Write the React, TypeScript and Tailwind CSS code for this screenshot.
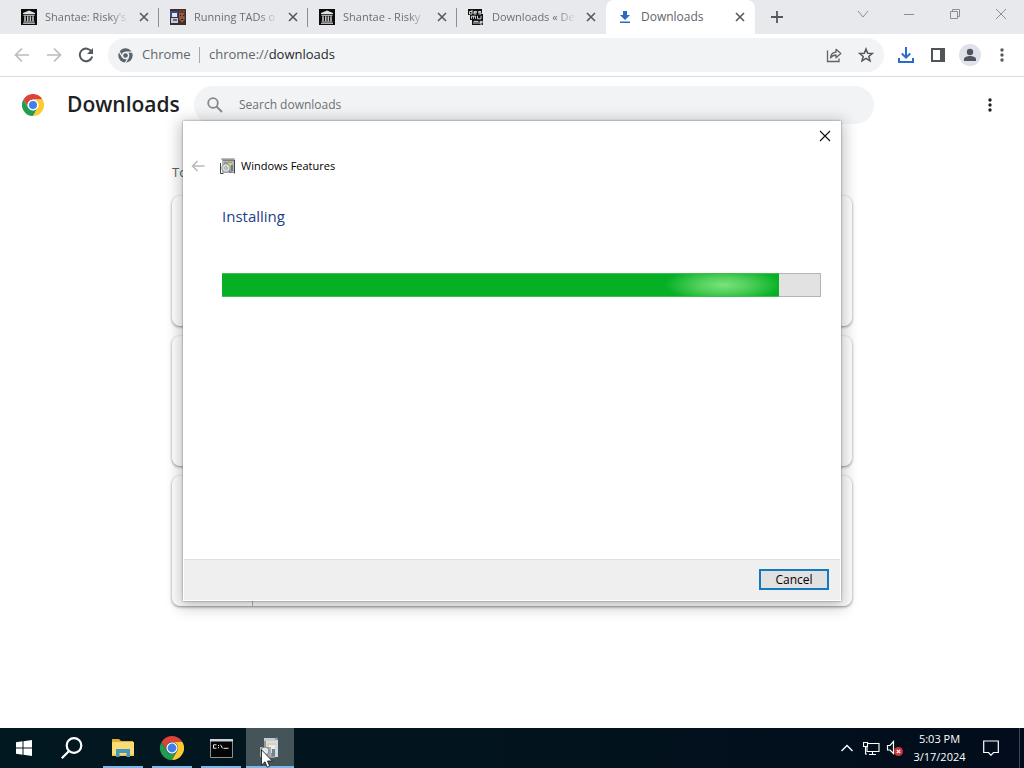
import type { ReactNode } from "react";

function ChromeLogo({ className }: { className: string }) {
  return (
    <svg viewBox="0 0 48 48" className={className} aria-hidden="true">
      <path d="M24 12h20.8A24 24 0 0 0 3.2 12l10.4 18A12 12 0 0 1 24 12z" fill="#db4437" />
      <path d="M34.4 30 24 48A24 24 0 0 1 3.2 12l10.4 18a12 12 0 0 0 20.8 0z" fill="#229c50" />
      <path d="M24 12h20.8A24 24 0 0 1 24 48l10.4-18A12 12 0 0 0 24 12z" fill="#fccb2e" />
      <circle cx="24" cy="24" r="11.5" fill="#fff" />
      <circle cx="24" cy="24" r="8.8" fill="#3f80ec" />
    </svg>
  );
}

function ChromeMono({ className }: { className: string }) {
  return (
    <svg viewBox="0 0 48 48" className={className} aria-hidden="true">
      <circle cx="24" cy="24" r="23" fill="#5a646c" />
      <path d="M24 13h22M14.5 29.5 3.5 11M33.5 29.5 23 48" stroke="#f1f3f4" strokeWidth="4" fill="none" />
      <circle cx="24" cy="24" r="12" fill="#f1f3f4" />
      <circle cx="24" cy="24" r="7.5" fill="#5a646c" />
    </svg>
  );
}

function ArchiveIcon() {
  return (
    <svg viewBox="0 0 16 16" className="size-4 shrink-0" aria-hidden="true">
      <path d="M0 0h16v16H0z" fill="#0c0c0c" />
      <path d="M8 1.4 14 4v1H2V4zM2.5 5.8h11v.9h-11zM2.5 12.6h11v.9h-11zM2 14.2h12v.9H2z" fill="#e2e2e2" />
      <path d="M3.2 7.2h1.6v5H3.2zM6 7.2h1.5v5H6zM8.6 7.2h1.5v5H8.6zM11.2 7.2h1.6v5h-1.6z" fill="#c4c4c4" />
    </svg>
  );
}

function TadsIcon() {
  return (
    <svg viewBox="0 0 16 16" className="size-4 shrink-0" aria-hidden="true">
      <path d="M0 0h16v16H0z" fill="#3d2d2c" />
      <path d="M0 2h8v6H0z" fill="#3b4a86" />
      <path d="M2 4h5v4H2z" fill="#dfe6f3" />
      <path d="M1 9h7v5H1z" fill="#c9cbd6" />
      <path d="M3 10h4v2H3z" fill="#5c6d9f" />
      <path d="M9 4h5l1 6-3 4-3-4z" fill="#8d5a48" />
      <path d="M10 6h1v1h-1zM13 6h1v1h-1zM11 10h2v1h-2z" fill="#2b1715" />
      <path d="M9 1h6v3H9z" fill="#6b3e2c" />
    </svg>
  );
}

function DesmumeIcon() {
  return (
    <svg viewBox="0 0 16 16" className="size-4 shrink-0" aria-hidden="true">
      <path d="M0 0h14v6H0zM2 5h13v6H2zM4 10h11v6H4z" fill="#111" />
      <path
        d="M4 1v4M4 2.500H1.500V5H4M8.500 5H6V2.500h2.500v1.200H6M13 2.500h-2.500v1.200H13V5h-2.500M3.500 9.800V7.200h4v2.600M5.500 7.200v2.600M9.500 6.800v3H13v-3M6 15v-2.600h4V15M8 12.400V15M14.300 15H12v-2.600h2.300v1.200H12"
        fill="none"
        stroke="#e6e6e6"
        strokeWidth=".9"
      />
    </svg>
  );
}

function DownloadTabIcon() {
  return (
    <svg viewBox="0 0 16 16" className="size-4 shrink-0" aria-hidden="true">
      <path d="M6 2h4v4h3L8 11 3 6h3zM3 12.500h10V14H3z" fill="#2a6bc8" />
    </svg>
  );
}

function CrossIcon() {
  return (
    <svg viewBox="0 0 10 10" className="size-[10px]" aria-hidden="true">
      <path d="m1 1 8 8M9 1 1 9" stroke="#55585c" strokeWidth="1.6" />
    </svg>
  );
}

function Tab({ icon, title, active }: { icon: ReactNode; title: string; active?: boolean }) {
  return (
    <div
      role="tab"
      aria-selected={!!active}
      className={
        active
          ? "flex h-[34px] w-[149px] shrink-0 items-center rounded-t-lg bg-white pl-[11px]"
          : "flex h-[34px] w-[149px] shrink-0 items-center pl-[11px]"
      }
    >
      {icon}
      <span
        className={
          active
            ? "ml-2 w-[84px] overflow-hidden text-[12px] whitespace-nowrap text-[#616469]"
            : "ml-2 w-[84px] overflow-hidden text-[11px] whitespace-nowrap text-[#6c6e72] [mask-image:linear-gradient(to_right,#000_78%,transparent)]"
        }
      >
        {title}
      </span>
      <button type="button" aria-label={`Close ${title}`} className="flex h-5 w-[30px] items-center justify-center">
        <CrossIcon />
      </button>
    </div>
  );
}

function Separator() {
  return <div className="-ml-px h-[19px] w-px shrink-0 bg-[#8b8e93]" />;
}

function TabStrip() {
  return (
    <div className="flex h-[34px] items-center bg-[#e8e9ec]">
      <div role="tablist" className="flex items-center pl-[10px]">
        <Tab icon={<ArchiveIcon />} title="Shantae: Risky's" />
        <Separator />
        <Tab icon={<TadsIcon />} title="Running TADs o" />
        <Separator />
        <Tab icon={<ArchiveIcon />} title="Shantae - Risky" />
        <Separator />
        <Tab icon={<DesmumeIcon />} title="Downloads « De" />
        <Tab icon={<DownloadTabIcon />} title="Downloads" active />
      </div>
      <button type="button" aria-label="New tab" className="ml-3 flex size-5 items-center justify-center">
        <svg viewBox="0 0 12 12" className="size-3" aria-hidden="true">
          <path d="M6 0v12M0 6h12" stroke="#55585c" strokeWidth="1.800" />
        </svg>
      </button>
      <div className="ml-auto flex h-7 self-start text-[#8b8e92]">
        <button type="button" aria-label="Search tabs" className="flex w-[46px] items-center justify-center">
          <svg viewBox="0 0 12 12" className="size-3" fill="none" stroke="currentColor">
            <path d="m1 3 5 6 5-6" />
          </svg>
        </button>
        <button type="button" aria-label="Minimize" className="flex w-[46px] items-center justify-center">
          <svg viewBox="0 0 12 12" className="size-3" fill="none" stroke="currentColor">
            <path d="M1 6.500h10" />
          </svg>
        </button>
        <button type="button" aria-label="Restore" className="flex w-[46px] items-center justify-center">
          <svg viewBox="0 0 12 12" className="size-3" fill="none" stroke="currentColor">
            <path d="M1.500 3.500h7v7h-7zM3.500 3.500v-2h7v7h-2" />
          </svg>
        </button>
        <button type="button" aria-label="Close window" className="flex w-[46px] items-center justify-center">
          <svg viewBox="0 0 12 12" className="size-3" fill="none" stroke="currentColor">
            <path d="m1 1 10 10M11 1 1 11" />
          </svg>
        </button>
      </div>
    </div>
  );
}

function Dots({ className }: { className: string }) {
  return (
    <svg viewBox="0 0 4 16" className={className} fill="currentColor" aria-hidden="true">
      <circle cx="2" cy="3" r="1.700" />
      <circle cx="2" cy="8" r="1.700" />
      <circle cx="2" cy="13" r="1.700" />
    </svg>
  );
}

function Toolbar() {
  return (
    <div className="flex h-[43px] items-center border-b border-[#d9dce0] bg-white pr-[6px] pl-[6px]">
      <button type="button" aria-label="Back" className="flex size-8 items-center justify-center text-[#babcbe]">
        <svg viewBox="0 0 16 16" className="size-4" fill="none" stroke="currentColor" strokeWidth="1.700">
          <path d="M15 8H2M8 1.500 1.500 8 8 14.500" />
        </svg>
      </button>
      <button type="button" aria-label="Forward" className="flex size-8 items-center justify-center text-[#babcbe]">
        <svg viewBox="0 0 16 16" className="size-4" fill="none" stroke="currentColor" strokeWidth="1.700">
          <path d="M1 8h13M8 1.500 14.500 8 8 14.500" />
        </svg>
      </button>
      <button type="button" aria-label="Reload" className="flex size-8 items-center justify-center text-[#55585c]">
        <svg viewBox="0 0 16 16" className="size-4" fill="none" stroke="currentColor" strokeWidth="2">
          <path d="M13.600 4.800A6.300 6.300 0 1 0 14.200 9.500" />
          <path d="M15 1v6H9z" fill="currentColor" stroke="none" />
        </svg>
      </button>
      <div className="ml-[6px] flex h-[34px] flex-1 items-center rounded-full bg-[#f1f3f4] pr-[2px] pl-[10px] text-[13px] text-[#63666b]">
        <ChromeMono className="size-[15px] shrink-0" />
        <span className="ml-[9px] w-[57px] whitespace-nowrap">Chrome</span>
        <span className="h-4 w-px bg-[#a5a8ac]" />
        <span className="ml-[9px] flex-1 whitespace-nowrap">
          chrome://<span className="text-[#26282b]">downloads</span>
        </span>
        <button type="button" aria-label="Share" className="flex w-8 justify-center text-[#606368]">
          <svg viewBox="0 0 16 16" className="size-4" fill="none" stroke="currentColor" strokeWidth="1.300">
            <path d="M1.500 3.500v11h11.500v-3" />
            <path d="M4.500 11c.3-3.800 2.200-5.600 5.500-5.800V2.300l4.800 4.300-4.800 4.200V8C7.500 8 6 8.800 4.500 11z" strokeLinejoin="round" />
          </svg>
        </button>
        <button type="button" aria-label="Bookmark" className="flex w-8 justify-center text-[#55585c]">
          <svg viewBox="0 0 16 16" className="size-4" fill="none" stroke="currentColor" strokeWidth="1.500">
            <path d="m8 2 1.700 4.200 4.600.3-3.500 2.900 1.200 4.500L8 11.400l-4 2.500 1.200-4.500-3.500-2.900 4.600-.3z" />
          </svg>
        </button>
      </div>
      <button type="button" aria-label="Downloads" className="ml-[6px] flex w-8 justify-center text-[#2a6bd2]">
        <svg viewBox="0 0 16 16" className="size-4" fill="none" stroke="currentColor" strokeWidth="2">
          <path d="M8 0v10.500M3.800 6.500 8 10.700l4.200-4.200M1 11v4h14v-4" />
        </svg>
      </button>
      <button type="button" aria-label="Side panel" className="flex w-8 justify-center">
        <svg viewBox="0 0 14 14" className="size-[14px]" aria-hidden="true">
          <path d="M0 0h14v14H0z" fill="#515459" />
          <path d="M2 2h7v10H2z" fill="#fff" />
        </svg>
      </button>
      <button type="button" aria-label="Profile" className="flex w-8 justify-center">
        <svg viewBox="0 0 22 22" className="size-[22px]" aria-hidden="true">
          <circle cx="11" cy="11" r="11" fill="#dfe2e8" />
          <circle cx="11" cy="8" r="3.200" fill="#4f5560" />
          <path d="M5 17v-2c0-2 3.500-3 6-3s6 1 6 3v2z" fill="#4f5560" />
        </svg>
      </button>
      <button type="button" aria-label="Chrome menu" className="flex w-8 justify-center text-[#55585c]">
        <Dots className="h-4 w-1" />
      </button>
    </div>
  );
}

function DownloadsPage() {
  return (
    <main className="flex flex-1 flex-col bg-white">
      <header className="flex h-14 items-center pr-8 pl-[22px]">
        <ChromeLogo className="size-[22px] shrink-0" />
        <h1 className="ml-[23px] w-[127px] text-[21px] font-semibold text-[#202124]">Downloads</h1>
        <div className="flex h-[38px] w-[680px] items-center rounded-full bg-[#f1f3f4] pl-[13px]">
          <svg viewBox="0 0 16 16" className="size-4 shrink-0" fill="none" stroke="#85888c" strokeWidth="1.800">
            <circle cx="6" cy="6" r="4.800" />
            <path d="m9.500 9.500 5.500 5.500" />
          </svg>
          <input
            type="text"
            aria-label="Search downloads"
            placeholder="Search downloads"
            className="ml-4 flex-1 bg-transparent text-[12px] outline-none placeholder:text-[#6d7074]"
          />
        </div>
        <button type="button" aria-label="More actions" className="ml-auto text-[#202124]">
          <Dots className="h-4 w-1" />
        </button>
      </header>
      <section className="mx-auto w-full max-w-[680px] pt-[29px]">
        <h2 className="h-[34px] text-[13px] leading-5 text-[#5c5f63]">Today</h2>
        <div className="flex flex-col gap-[10px]">
          <div className="h-[130px] rounded-lg bg-white shadow-[0_1px_3px_rgba(0,0,0,0.45)]" />
          <div className="h-[130px] rounded-lg bg-white shadow-[0_1px_3px_rgba(0,0,0,0.45)]" />
          <div className="flex h-[130px] rounded-lg bg-white shadow-[0_1px_3px_rgba(0,0,0,0.45)]">
            <div className="w-[81px] border-r border-[#b5b5b5]" />
          </div>
        </div>
      </section>
    </main>
  );
}

function FeaturesIcon({ className }: { className: string }) {
  return (
    <svg viewBox="0 0 16 16" className={className} aria-hidden="true">
      <path d="M2 1h12v14H2z" fill="#b3b8b6" />
      <path d="M1 1h14M3 2.500h11" stroke="#7b807e" fill="none" />
      <path d="M.5 5v10.500h3M14.500 2v13.500" stroke="#3d4446" fill="none" />
      <path d="M4 4h8v2H4z" fill="#8d9a9b" />
      <path d="M8 5h4v3H8z" fill="#dfd04c" />
      <path d="M11 7h2v6h-2z" fill="#658183" />
      <circle cx="6" cy="10" r="4.200" fill="#dadddd" stroke="#8b9092" />
      <circle cx="6" cy="10" r="1.300" fill="#fff" stroke="#6d7375" strokeWidth=".7" />
      <path d="m9 12 5 3H9z" fill="#7c8c92" />
    </svg>
  );
}

function InstallDialog() {
  return (
    <div
      role="dialog"
      aria-label="Windows Features"
      className="absolute top-[121px] left-1/2 flex h-[480px] w-[658px] -translate-x-1/2 flex-col border border-white bg-white text-black shadow-[0_0_2px_rgba(0,0,0,0.45),0_3px_14px_3px_rgba(0,0,0,0.24)]"
    >
      <div className="flex h-[28px] justify-end">
        <button type="button" aria-label="Close" className="flex w-[30px] items-center justify-center">
          <svg viewBox="0 0 12 12" className="size-3" fill="none" stroke="#111" strokeWidth="1.100">
            <path d="m1 1 10 10M11 1 1 11" />
          </svg>
        </button>
      </div>
      <div className="flex h-8 items-center pl-[7px]">
        <button type="button" aria-label="Previous" disabled>
          <svg viewBox="0 0 14 14" className="size-[14px]" fill="none" stroke="#bbb" strokeWidth="1.600">
            <path d="M13.500 7H2M6.500 2l-5 5 5 5" />
          </svg>
        </button>
        <FeaturesIcon className="ml-[15px] size-4" />
        <span className="ml-[5px] text-[11px]">Windows Features</span>
      </div>
      <div className="flex flex-1 flex-col pr-[19px] pl-[38px]">
        <h2 className="mt-[22px] text-[15px] leading-6 text-[#1c3f87]">Installing</h2>
        <div role="progressbar" aria-label="Installing" aria-valuenow={93} className="mt-[45px] flex h-6">
          <div className="w-[93%] border-y border-[#45b955] bg-[#06b025] bg-[radial-gradient(ellipse_58px_18px_at_90%_50%,#7ae37c,#4fcf5a_45%,transparent)]" />
          <div className="flex-1 border border-l-0 border-[#b4b4b4] bg-[#e2e2e2]" />
        </div>
      </div>
      <footer className="flex h-[41px] items-start justify-end border-t border-[#dfdfdf] bg-[#efefef] pt-[9px] pr-[11px]">
        <button type="button" className="h-[21px] w-[70px] border-2 border-[#1379bd] bg-[#e1e1e1] text-[12px] leading-4">
          Cancel
        </button>
      </footer>
    </div>
  );
}

function TaskButton({ label, active, children }: { label: string; active?: boolean; children: ReactNode }) {
  return (
    <button
      type="button"
      aria-label={label}
      className={
        active
          ? "relative flex h-10 w-12 flex-col items-center bg-[#445459]"
          : "flex h-10 w-12 flex-col items-center"
      }
    >
      <span className="flex h-[38px] items-center pt-[2px]">{children}</span>
      <span className={active ? "h-[2px] w-12 bg-[#76b9ed]" : "h-[2px] w-10 bg-[#76b9ed]"} />
    </button>
  );
}

function Taskbar() {
  return (
    <footer className="flex h-10 items-center bg-[linear-gradient(90deg,#021820,#02131d_55%,#020c1c)] text-white">
      <button type="button" aria-label="Start" className="flex h-10 w-12 items-center justify-center">
        <svg viewBox="0 0 16 16" className="size-4" fill="#fff">
          <path d="M0 2.200 6.500 1.300v6.200H0zM7.500 1.200 16 0v7.500H7.500zM0 8.500h6.500v6.200L0 13.800zM7.500 8.500H16V16l-8.500-1.200z" />
        </svg>
      </button>
      <button type="button" aria-label="Search" className="flex h-10 w-12 items-center justify-center">
        <svg viewBox="0 0 22 22" className="size-[22px]" fill="none" stroke="#fff" strokeWidth="2.200">
          <circle cx="13" cy="8.500" r="7.300" />
          <path d="M8 14 .8 21.200" />
        </svg>
      </button>
      <div className="ml-[3px] flex gap-px">
        <TaskButton label="File Explorer">
          <svg viewBox="0 0 22 20" className="h-5 w-[22px]" aria-hidden="true">
            <path d="M0 1h7l2 2h12v3H0z" fill="#e3ad33" />
            <path d="M0 4h22v14H0z" fill="#fbdb76" />
            <path d="M0 16.500h22V18H0z" fill="#edc352" />
            <path d="M4 11h14v8h-3.500v-4h-7v4H4z" fill="#4598bd" />
          </svg>
        </TaskButton>
        <TaskButton label="Google Chrome">
          <ChromeLogo className="size-6" />
        </TaskButton>
        <TaskButton label="Command Prompt">
          <svg viewBox="0 0 23 19" className="h-[19px] w-[23px]" aria-hidden="true">
            <path d="M.5.500h22v18H.5z" fill="#050505" stroke="#8b9194" />
            <path d="M0 0h23v2.500H0z" fill="#cdd3d8" />
            <path d="M6.500 5.800h-3v3.400h3M8.500 6v1M8.500 8v1.200M10.500 5.800l2 3.500M13.500 9.300h5" fill="none" stroke="#e8e8e8" />
          </svg>
        </TaskButton>
        <TaskButton label="Windows Features" active>
          <svg viewBox="0 0 22 24" className="h-6 w-[22px]" aria-hidden="true">
            <path d="M5 2h12l1-1 1 3v16l-4 2H5z" fill="#929ba2" />
            <path d="M5 2h11v3H5z" fill="#c3cbd2" />
            <path d="M7 5h9v12H7z" fill="#d9dce0" />
            <path d="M8 7h8v3H8z" fill="#dfd28e" />
            <path d="M10 9h7v4h-7z" fill="#e9ecf0" />
            <path d="M16 4h3v17h-3z" fill="#d4d9df" />
            <path d="M13 13h3v7h-3z" fill="#6e8292" />
            <path d="M1 11h11v10H1z" fill="#a8acb0" />
            <circle cx="6" cy="15" r="4" fill="#e5e5e5" stroke="#7d8487" />
          </svg>
          <svg viewBox="0 0 12 19" className="absolute top-[21px] left-[15px] h-[19px] w-3" aria-hidden="true">
            <path d="M.5.800v15.400l3.500-3.400 2.200 5.400 2.500-1-2.200-5.200h4.800z" fill="#fff" stroke="#222" strokeWidth=".9" />
          </svg>
        </TaskButton>
      </div>
      <div className="ml-auto flex h-10 items-center">
        <button type="button" aria-label="Show hidden icons" className="flex w-6 justify-center">
          <svg viewBox="0 0 12 12" className="size-3" fill="none" stroke="#fff" strokeWidth="1.400">
            <path d="m.5 9 5.500-5.500L11.500 9" />
          </svg>
        </button>
        <button type="button" aria-label="Network" className="flex w-6 justify-center">
          <svg viewBox="0 0 17 15" className="h-[15px] w-[17px]" fill="none" stroke="#fff" strokeWidth="1.100">
            <path d="M5 2.500h11v8H4V6M9.500 10.500v3M6 13.500h7M.5 1.500h4v4h-4zM2.500 5.500V13h1.500" />
          </svg>
        </button>
        <button type="button" aria-label="Volume muted" className="flex w-6 justify-center">
          <svg viewBox="0 0 18 16" className="h-4 w-[18px]" aria-hidden="true">
            <path d="M1.500 5.500H4l3.500-4v12L4 10H1.500z" fill="none" stroke="#fff" strokeWidth="1.200" />
            <circle cx="12.500" cy="11.500" r="4.500" fill="#cf3339" />
            <path d="m10.800 9.800 3.400 3.400M14.200 9.800l-3.400 3.400" stroke="#fff" strokeWidth="1.200" />
          </svg>
        </button>
        <div className="w-[65px] text-center text-[11px] leading-[18px] whitespace-nowrap">
          <div>5:03 PM</div>
          <div>3/17/2024</div>
        </div>
        <button type="button" aria-label="Notifications" className="flex w-[38px] justify-center">
          <svg viewBox="0 0 16 16" className="size-4" fill="none" stroke="#fff" strokeWidth="1.200">
            <path d="M.7 1h14.600v11.500H10.500L8 15.200l-2.500-2.700H.7z" />
          </svg>
        </button>
        <div className="mr-1 ml-[9px] h-10 w-px bg-[#3b4854]" />
      </div>
    </footer>
  );
}

export default function App() {
  return (
    <div className="relative flex min-h-screen flex-col overflow-hidden bg-white font-['Open_Sans','Noto_Sans',sans-serif]">
      <TabStrip />
      <Toolbar />
      <DownloadsPage />
      <Taskbar />
      <InstallDialog />
    </div>
  );
}
